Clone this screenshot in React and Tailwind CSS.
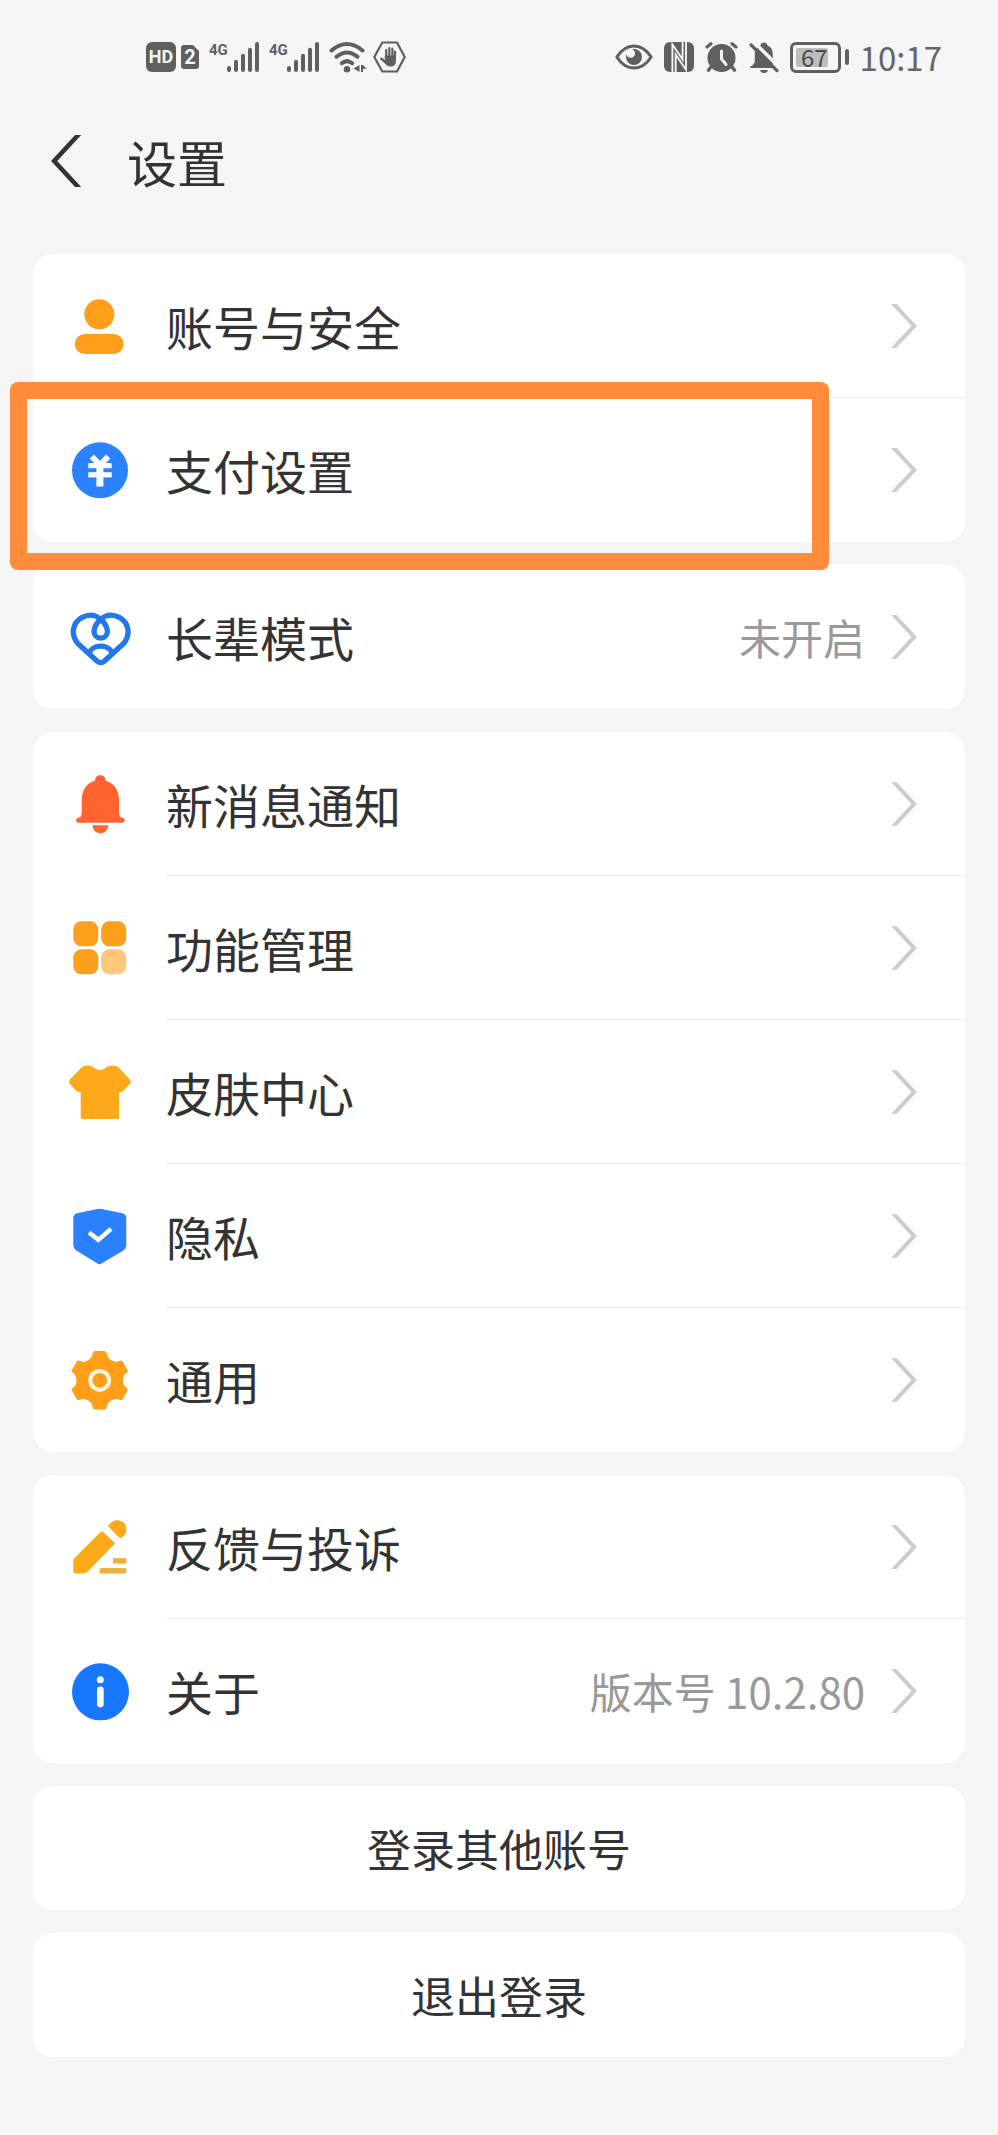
import React from 'react';

function Chevron() {
  return (
    <svg className="h-[44px] w-[26px] shrink-0" viewBox="0 0 26 44" fill="none" stroke="#cccccc" strokeWidth="4">
      <path d="M0.8 -2 L23.2 22 L0.8 46" />
    </svg>
  );
}

function IconBox({ children }) {
  return (
    <svg className="h-16 w-16 shrink-0" viewBox="-2 -2 64 64" fill="none">
      {children}
    </svg>
  );
}

const UserIcon = () => (
  <IconBox>
    <circle cx="30.3" cy="18.3" r="15" fill="#ff9f19" />
    <rect x="5.7" y="38" width="49" height="20" rx="10" fill="#ff9f19" />
  </IconBox>
);

const PayIcon = () => (
  <IconBox>
    <circle cx="31" cy="30.3" r="28" fill="#2b82ff" />
    <path d="M22.8 16.5 L31 25 L39.2 16.5" stroke="#fff" strokeWidth="5.6" />
    <rect x="19.3" y="23" width="23.4" height="5.2" fill="#fff" />
    <rect x="19.3" y="32.2" width="23.4" height="5.2" fill="#fff" />
    <rect x="27.4" y="25" width="7" height="21.5" fill="#fff" />
  </IconBox>
);

const HeartIcon = () => (
  <IconBox>
    <g stroke="#2277ea" strokeWidth="5.3" strokeLinejoin="round">
      <path d="M31.7 12.2 C37 7.6 44 7.2 50.3 10.4 C59.6 15.5 62 27 55.1 36 L35.5 54 Q31.7 57.2 27.9 54 L8.3 36 C1.4 27 3.8 15.5 13.1 10.4 C19.4 7.2 26.4 7.6 31.7 12.2 Z" />
      <path d="M31.7 12.2 C36.5 16.6 38.4 20 38.4 24.4 A6.7 6.7 0 0 1 25 24.4 C25 20 26.9 16.6 31.7 12.2 Z" />
      <path d="M20.5 45.5 C23.5 37 39.9 37 42.9 45.5" />
    </g>
  </IconBox>
);

const BellIcon = () => (
  <IconBox>
    <g fill="#ff6430">
      <rect x="26" y="1" width="10.6" height="14" rx="5.3" />
      <path d="M12.7 26 C12.7 14 20 6 31.3 6 C42.6 6 50 14 50 26 V38 C50 41.5 51 43.7 53 43.7 A2.5 2.5 0 0 1 53 48.7 H9.6 A2.5 2.5 0 0 1 9.6 43.7 C11.7 43.7 12.7 41.5 12.7 38 Z" />
      <path d="M23.3 51.3 H39.3 C38.6 56.4 35.6 59.3 31.3 59.3 C27 59.3 24 56.4 23.3 51.3 Z" />
    </g>
  </IconBox>
);

const GridIcon = () => (
  <IconBox>
    <rect x="4.3" y="3.3" width="25" height="25" rx="8" fill="#fc9f1a" />
    <rect x="32.2" y="3.3" width="25" height="25" rx="8" fill="#fc9f1a" />
    <rect x="4.3" y="31.3" width="25" height="25" rx="8" fill="#fc9f1a" />
    <rect x="32.2" y="31.3" width="25" height="25" rx="8" fill="#fdc77c" />
  </IconBox>
);

const ShirtIcon = () => (
  <IconBox>
    <path
      d="M16.5 3.7 H20.5 C24.5 3.7 25.5 7.8 31 7.8 C36.5 7.8 37.5 3.7 41.5 3.7 H45.8 Q48 3.7 49.6 5.3 L60.8 17.6 Q62.6 20 60.8 22 L54 29 Q53 30 51.5 30 H50 V55.5 Q50 57 48.5 57 H13.2 Q11.7 57 11.7 55.5 V30 H10 Q8.6 30 7.6 29 L0.9 22 Q-0.9 20 0.9 17.6 L12.7 5.3 Q14.3 3.7 16.5 3.7 Z"
      fill="#fda919"
    />
  </IconBox>
);

const ShieldIcon = () => (
  <IconBox>
    <path
      d="M28.5 3 Q30.5 2.5 32.5 3 L53.5 7.2 Q57.3 8.2 57.3 12 V38.5 Q57.3 42.5 54 44.8 L32.5 57.6 Q30.5 58.7 28.5 57.6 L7.7 44.8 Q4.3 42.5 4.3 38.5 V12 Q4.3 8.2 8 7.2 Z"
      fill="#2b80ff"
    />
    <path d="M20 26.5 L29.3 33.8 L42 22.8" stroke="#fff" strokeWidth="4.4" />
  </IconBox>
);

const GearIcon = () => (
  <IconBox>
    <g transform="translate(30.7 30.3)" fill="#ff9f19">
      <circle r="23.3" />
      {[0, 60, 120].map((angle) => (
        <path
          key={angle}
          transform={`rotate(${angle})`}
          d="M-4.6 -29.3 H4.6 Q6.8 -29.3 7 -27 Q7.4 -22.5 10.5 -21 V21 Q7.4 22.5 7 27 Q6.8 29.3 4.6 29.3 H-4.6 Q-6.8 29.3 -7 27 Q-7.4 22.5 -10.5 21 V-21 Q-7.4 -22.5 -7 -27 Q-6.8 -29.3 -4.6 -29.3 Z"
        />
      ))}
      <circle r="9.4" stroke="#fff6e2" strokeWidth="4" />
    </g>
  </IconBox>
);

const PencilIcon = () => (
  <IconBox>
    <g fill="#fdaa1a">
      <path d="M31.6 15 Q32.9 13.8 34.2 15 L46.3 26.3 L18.5 54.8 Q17 56.5 14.8 56.5 H6.5 Q4.3 56.5 4.3 54.3 V44 Q4.3 42.3 5.6 41 Z" />
      <path d="M39 9.2 C42.5 2.6 50.6 1.3 55 6.2 C59.3 11 57.7 18.4 51.3 21.4 Z" />
      <rect x="44" y="41.2" width="13.3" height="5.4" fill="#efad3c" />
      <rect x="30.7" y="51.1" width="26.6" height="5.4" fill="#efad3c" />
    </g>
  </IconBox>
);

const InfoIcon = () => (
  <IconBox>
    <circle cx="31.5" cy="30.8" r="28.5" fill="#1777ff" />
    <circle cx="31.3" cy="18.8" r="3.5" fill="#fff" />
    <rect x="28" y="25.6" width="6.7" height="20.8" rx="3.3" fill="#fff" />
  </IconBox>
);

const groups = [
  [
    { label: '账号与安全', icon: UserIcon },
    { label: '支付设置', icon: PayIcon, highlighted: true },
  ],
  [{ label: '长辈模式', icon: HeartIcon, value: '未开启' }],
  [
    { label: '新消息通知', icon: BellIcon },
    { label: '功能管理', icon: GridIcon },
    { label: '皮肤中心', icon: ShirtIcon },
    { label: '隐私', icon: ShieldIcon },
    { label: '通用', icon: GearIcon },
  ],
  [
    { label: '反馈与投诉', icon: PencilIcon },
    { label: '关于', icon: InfoIcon, value: '版本号 10.2.80' },
  ],
];

function SettingRow({ item, last }) {
  const Icon = item.icon;
  return (
    <li className="relative">
      <button type="button" className="flex h-36 w-full items-center gap-[35px] pl-[34px] text-left">
        <Icon />
        <span className={`flex h-full min-w-0 flex-1 items-center pr-12 ${last ? '' : 'border-b border-[#eeeeee]'}`}>
          <span className="flex-1 text-[47px] leading-[60px] text-[#333333]">{item.label}</span>
          {item.value && <span className="mr-[26px] text-[42px] leading-[60px] text-[#999999]">{item.value}</span>}
          <Chevron />
        </span>
      </button>
      {item.highlighted && (
        <div className="pointer-events-none absolute -top-4 right-[136px] -bottom-7 -left-[23px] z-10 rounded-lg border-[17px] border-[#ff8c3b]" />
      )}
    </li>
  );
}

function Signal() {
  return (
    <div className="flex h-[30px] items-start">
      <span className="w-[18px] font-[Roboto,sans-serif] text-[15px] leading-[16px] font-bold text-[#5f5f5f]">4G</span>
      <svg className="h-[30px] w-8" viewBox="0 0 32 30" fill="#5f5f5f">
        <rect x="0" y="24" width="4" height="6" rx="2" />
        <rect x="7" y="17.7" width="4" height="12.3" rx="2" />
        <rect x="14" y="11.7" width="4" height="18.3" rx="2" />
        <rect x="21" y="5.7" width="4" height="24.3" rx="2" />
        <rect x="28" y="0" width="4" height="30" rx="2" />
      </svg>
    </div>
  );
}

function StatusBar() {
  return (
    <div className="flex h-[114px] items-center justify-between pr-[56px] pl-[146px]">
      <div className="flex items-center gap-[10px]">
        <div className="flex items-center gap-[5px] font-[Roboto,sans-serif] font-bold text-[#f5f5f5]">
          <span className="flex h-[30px] w-[30px] items-center justify-center rounded-md bg-[#5f5f5f] text-[18px] leading-[24px]">HD</span>
          <span className="flex h-6 w-[18px] items-center justify-center rounded-[3px] bg-[#5f5f5f] text-[20px] leading-[24px] [clip-path:polygon(0_0,66%_0,100%_25%,100%_100%,0_100%)]">2</span>
        </div>
        <Signal />
        <Signal />
        <div className="flex items-center gap-[6px]">
          {/* wifi with traffic arrows */}
          <svg className="h-8 w-[38px]" viewBox="0 0 38 32" fill="none" stroke="#5f5f5f" strokeWidth="4" strokeLinecap="round">
            <path d="M2.5 9.5 Q18 -3.5 33.5 9.5" />
            <path d="M7.5 15.8 Q18 7.2 28.5 15.8" />
            <path d="M12.8 22.2 Q18 18 23.2 22.2" />
            <circle cx="18" cy="28.2" r="3.2" fill="#5f5f5f" stroke="none" />
            <path d="M24.5 27.5 L30.5 24 V31 Z M32 24 H34 L37.5 27.5 L34 28 V31 H32 Z" fill="#5f5f5f" stroke="none" />
          </svg>
          <svg className="h-8 w-[33px]" viewBox="0 0 33 32" fill="none" stroke="#5f5f5f" strokeLinecap="round" strokeLinejoin="round">
            <path d="M1.3 16 L9.3 1.5 H24 L31.7 16 L24 30.5 H9.3 Z" strokeWidth="2.2" />
            <path d="M12.6 15 H22.4 V20.5 Q22.4 25 18 25 H16.5 Q14 25 12.6 22.5 Z" fill="#5f5f5f" strokeWidth="1" />
            <path d="M13.2 16 V9 M16.3 16 V7 M19.4 16 V7.6 M22 17 V10.5" strokeWidth="2.2" />
            <path d="M13.5 22 L8.3 17.8" strokeWidth="2.4" />
          </svg>
        </div>
      </div>

      <div className="flex items-center gap-[11px]">
        <svg className="h-[26px] w-[38px]" viewBox="0 0 38 26" fill="none">
          <path d="M1.8 13 Q9 2 19 2 Q29 2 36.2 13 Q29 24 19 24 Q9 24 1.8 13 Z" stroke="#5f5f5f" strokeWidth="3" strokeLinejoin="round" />
          <path d="M19 5 A8 8 0 1 1 11 13 Q11 11.6 11.4 10.5 A4.4 4.4 0 1 0 17 5.2 Q18 5 19 5 Z" fill="#5f5f5f" />
        </svg>
        <svg className="h-[30px] w-[30px]" viewBox="0 0 30 30" fill="none">
          <rect width="30" height="30" rx="6" fill="#5f5f5f" />
          <path d="M8.4 31 V2.5 L18.6 17.5 V-1" stroke="#f5f5f5" strokeWidth="1.9" />
          <path d="M11.7 31 V12.5 L22 27.8 V-1" stroke="#f5f5f5" strokeWidth="1.9" />
        </svg>
        <svg className="h-[30px] w-[33px]" viewBox="0 0 33 30" fill="none" strokeLinecap="round">
          <circle cx="16.5" cy="16" r="14" fill="#5f5f5f" />
          <path d="M2 5 L6 1.8 M31 5 L27 1.8 M5.5 25.5 L3.5 28.3 M27.5 25.5 L29.5 28.3" stroke="#5f5f5f" strokeWidth="3.2" />
          <path d="M16.5 9 V17 L21 22.5" stroke="#f5f5f5" strokeWidth="3" />
        </svg>
        <svg className="h-[31px] w-[30px]" viewBox="0 0 30 31">
          <path d="M4.5 26 H25.5 L23.8 23.5 V12 Q23.8 5.5 18.5 3.4 Q17.8 0.6 15 0.6 Q12.2 0.6 11.5 3.4 Q5.8 5.8 5.8 12.5 V20 L3 24 H1.5 V26 Z" fill="#5f5f5f" />
          <path d="M11 28 H19 Q18.3 31 15 31 Q11.7 31 11 28 Z" fill="#5f5f5f" />
          <path d="M4 -1 L30.5 25.5" stroke="#f5f5f5" strokeWidth="3.4" />
          <path d="M2 2.8 L28 28.6" stroke="#5f5f5f" strokeWidth="3.2" strokeLinecap="round" />
        </svg>
        <div className="flex items-center gap-1">
          <div className="flex h-[31px] w-[51px] rounded-md border-[3px] border-[#5f5f5f] p-[3px]">
            <div className="flex w-8 items-center justify-end rounded-[2px] bg-[#bcbcbc]">
              <span className="text-[24px] leading-[36px] text-[#4a4a4a]">67</span>
            </div>
          </div>
          <div className="h-4 w-1 rounded-full bg-[#5f5f5f]" />
        </div>
        <span className="text-[33px] leading-[40px] text-[#666666]">10:17</span>
      </div>
    </div>
  );
}

function App() {
  return (
    <main className="min-h-screen bg-[#f5f5f5] pb-[78px] font-['Noto_Sans_CJK_SC',sans-serif]">
      <StatusBar />

      <header className="flex h-[94px] items-center gap-[46px] pl-[51px]">
        <button type="button" aria-label="返回">
          <svg className="h-[52px] w-[30px]" viewBox="0 0 30 52" fill="none" stroke="#333333" strokeWidth="4.6">
            <path d="M29 -2 L3.2 26 L29 54" />
          </svg>
        </button>
        <h1 className="text-[50px] leading-[60px] text-[#333333]">设置</h1>
      </header>

      <div className="mt-[46px] flex flex-col gap-[23px] px-[33px]">
        {groups.map((items) => (
          <ul key={items[0].label} className="rounded-[20px] bg-white">
            {items.map((item, i) => (
              <SettingRow key={item.label} item={item} last={i === items.length - 1} />
            ))}
          </ul>
        ))}
        <button type="button" className="h-[124px] rounded-[20px] bg-white text-[44px] leading-[60px] text-[#333333]">
          登录其他账号
        </button>
        <button type="button" className="h-[124px] rounded-[20px] bg-white text-[44px] leading-[60px] text-[#333333]">
          退出登录
        </button>
      </div>
    </main>
  );
}

export default App;
